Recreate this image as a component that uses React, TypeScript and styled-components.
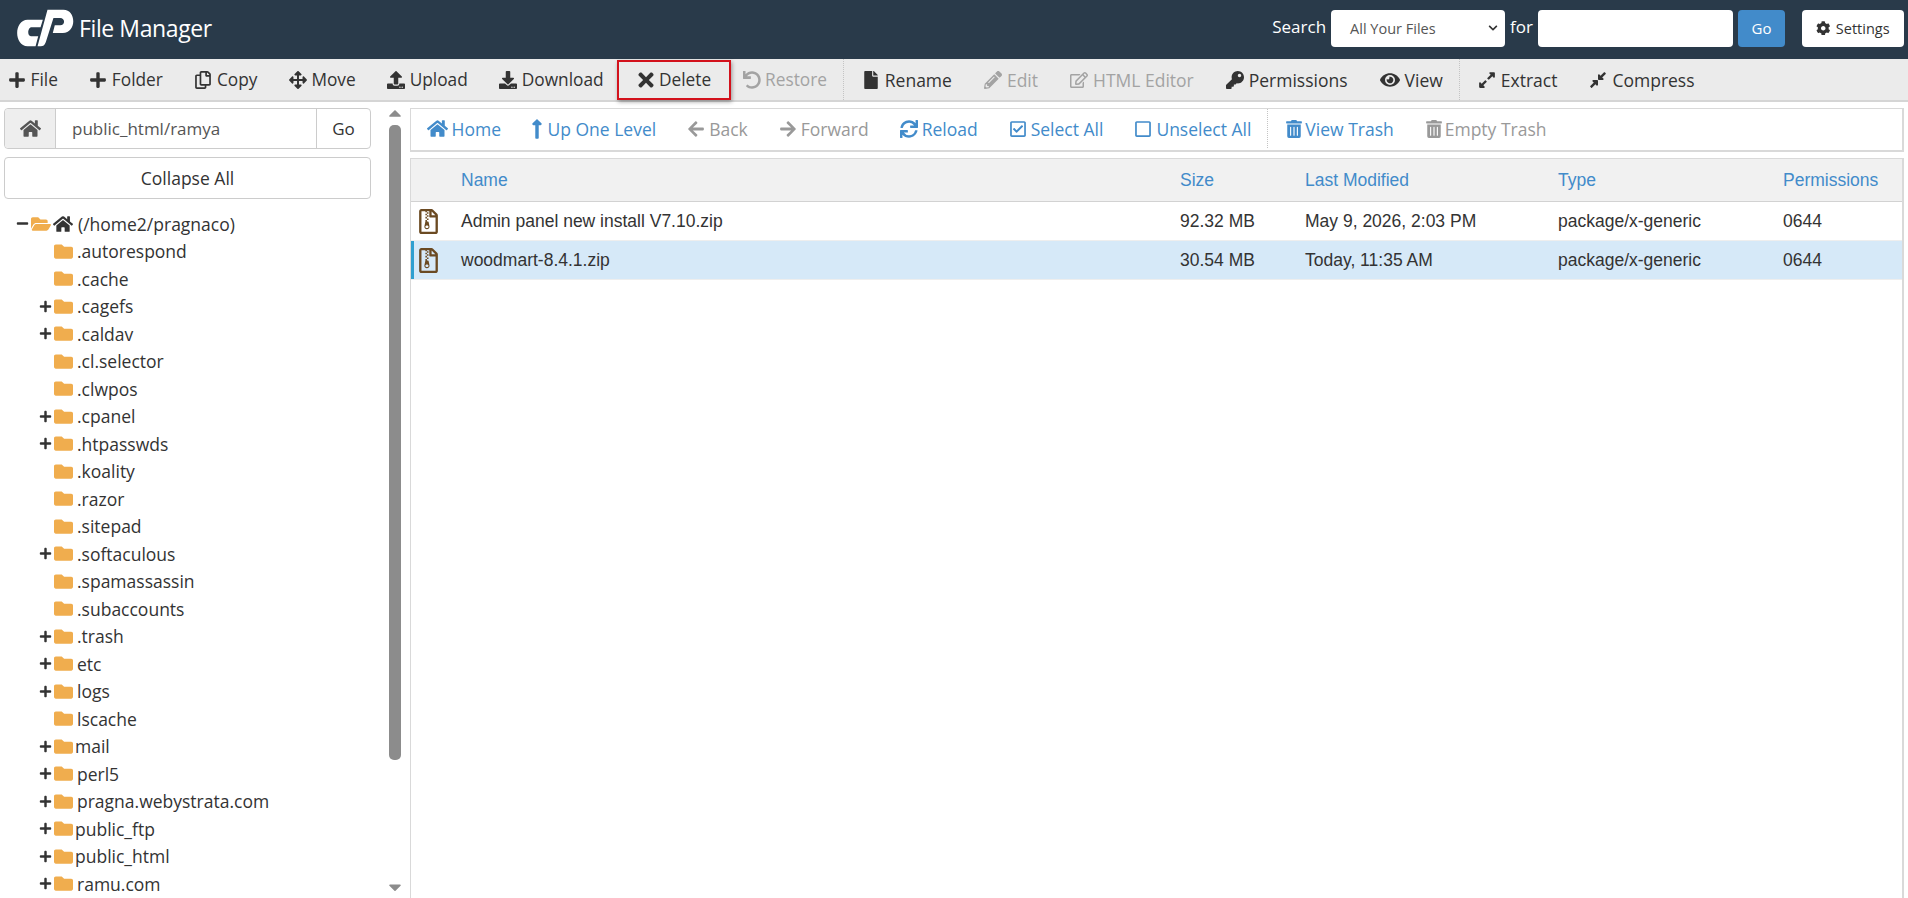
import { ReactElement, ReactNode } from "react";
import styled, { createGlobalStyle } from "styled-components";
import {
    FaArrowLeft, FaArrowRight, FaArrowsAlt, FaCaretDown, FaCaretUp, FaChevronDown, FaCog, FaCompressAlt, FaDownload,
    FaExpandAlt, FaEye, FaFile, FaFolder, FaFolderOpen, FaHome, FaKey, FaLongArrowAltUp, FaMinus, FaPencilAlt, FaPlus,
    FaRegCheckSquare, FaRegCopy, FaRegEdit, FaRegFileArchive, FaRegSquare, FaSync, FaTimes, FaTrashAlt, FaUndo, FaUpload,
} from "react-icons/fa";

const GlobalStyle = createGlobalStyle`
    html, body {
        margin: 0;
        height: 100%;
        overflow: hidden;
        background: #fff;
        font-family: "Open Sans", sans-serif;
        color: #333;
    }
`;

// react-icons draws every glyph in a 1em box, so the wide and narrow ones need their own size
const HomeGlyph = styled(FaHome)`
    && {
        font-size: 21px;
    }
`;

const EyeGlyph = styled(FaEye)`
    && {
        font-size: 20px;
    }
`;

const CrossGlyph = styled(FaTimes)`
    && {
        font-size: 22px;
        margin: 0 -3px 0 -3.5px;
    }
`;

const UpGlyph = styled(FaLongArrowAltUp)`
    && {
        font-size: 22px;
        margin: 0 -5px 0 -5.5px;
    }
`;

const TrashGlyph = styled(FaTrashAlt)`
    margin-right: -2px;
`;

type Action = { icon: ReactNode; label: string; disabled?: boolean; marked?: boolean };

const fileActions: Action[][] = [
    [
        { icon: <FaPlus />, label: "File" },
        { icon: <FaPlus />, label: "Folder" },
        { icon: <FaRegCopy />, label: "Copy" },
        { icon: <FaArrowsAlt />, label: "Move" },
        { icon: <FaUpload />, label: "Upload" },
        { icon: <FaDownload />, label: "Download" },
        { icon: <CrossGlyph />, label: "Delete", marked: true },
        { icon: <FaUndo />, label: "Restore", disabled: true },
    ],
    [
        { icon: <FaFile />, label: "Rename" },
        { icon: <FaPencilAlt />, label: "Edit", disabled: true },
        { icon: <FaRegEdit />, label: "HTML Editor", disabled: true },
        { icon: <FaKey />, label: "Permissions" },
        { icon: <EyeGlyph />, label: "View" },
    ],
    [
        { icon: <FaExpandAlt />, label: "Extract" },
        { icon: <FaCompressAlt />, label: "Compress" },
    ],
];

const navActions: Action[][] = [
    [
        { icon: <HomeGlyph />, label: "Home" },
        { icon: <UpGlyph />, label: "Up One Level" },
        { icon: <FaArrowLeft />, label: "Back", disabled: true },
        { icon: <FaArrowRight />, label: "Forward", disabled: true },
        { icon: <FaSync />, label: "Reload" },
        { icon: <FaRegCheckSquare />, label: "Select All" },
        { icon: <FaRegSquare />, label: "Unselect All" },
    ],
    [
        { icon: <TrashGlyph />, label: "View Trash" },
        { icon: <TrashGlyph />, label: "Empty Trash", disabled: true },
    ],
];

const tree: { name: string; more?: boolean; tight?: boolean }[] = [
    { name: ".autorespond" },
    { name: ".cache" },
    { name: ".cagefs", more: true },
    { name: ".caldav", more: true },
    { name: ".cl.selector" },
    { name: ".clwpos" },
    { name: ".cpanel", more: true },
    { name: ".htpasswds", more: true },
    { name: ".koality" },
    { name: ".razor" },
    { name: ".sitepad" },
    { name: ".softaculous", more: true },
    { name: ".spamassassin" },
    { name: ".subaccounts" },
    { name: ".trash", more: true },
    { name: "etc", more: true },
    { name: "logs", more: true },
    { name: "lscache" },
    { name: "mail", more: true, tight: true },
    { name: "perl5", more: true },
    { name: "pragna.webystrata.com", more: true },
    { name: "public_ftp", more: true, tight: true },
    { name: "public_html", more: true, tight: true },
    { name: "ramu.com", more: true },
];

const files = [
    { name: "Admin panel new install V7.10.zip", size: "92.32 MB", modified: "May 9, 2026, 2:03 PM", type: "package/x-generic", perms: "0644" },
    { name: "woodmart-8.4.1.zip", size: "30.54 MB", modified: "Today, 11:35 AM", type: "package/x-generic", perms: "0644", selected: true },
];

export default function App(): ReactElement {
    return (
        <Page>
            <GlobalStyle />
            <TopBar>
                <Brand>
                    <svg width="58" height="40" viewBox="20 10 175 120" fill="#fff">
                        <path d="M52 45 H98 L91 68 H64 C52 68 50 95 62 95 H84 L76 125 H52 C10 125 10 45 52 45 Z" />
                        <path d="M112 15 H160 C200 15 200 85 158 85 H128 L134 62 H150 C166 62 166 40 150 40 H130 L107 112 C104 122 98 125 92 125 H82 Z" />
                    </svg>
                    <BrandName>File Manager</BrandName>
                </Brand>
                <SearchArea>
                    <SearchLabel>Search</SearchLabel>
                    <ScopeSelect>
                        All Your Files
                        <FaChevronDown />
                    </ScopeSelect>
                    <SearchLabel>for</SearchLabel>
                    <SearchInput />
                    <GoButton>Go</GoButton>
                    <SettingsButton><FaCog /> Settings</SettingsButton>
                </SearchArea>
            </TopBar>

            <MainToolbar>
                {fileActions.map((group, i) => (
                    <ToolGroup key={i} $first={i === 0}>
                        {group.map(a => (
                            <ToolItem key={a.label} $compact={i === 0} $disabled={a.disabled} $marked={a.marked}>
                                {a.icon}{a.label}
                            </ToolItem>
                        ))}
                    </ToolGroup>
                ))}
            </MainToolbar>

            <Workspace>
                <Sidebar>
                    <PathBar>
                        <PathHome><HomeGlyph /></PathHome>
                        <PathValue>public_html/ramya</PathValue>
                        <PathGo>Go</PathGo>
                    </PathBar>
                    <CollapseButton>Collapse All</CollapseButton>
                    <TreeRoot>
                        <TreeToggle><FaMinus /></TreeToggle>
                        <OpenFolderIcon />
                        <RootHomeIcon />
                        <RootLabel>(/home2/pragnaco)</RootLabel>
                    </TreeRoot>
                    {tree.map(t => (
                        <TreeRow key={t.name}>
                            <TreeToggle>{t.more && <FaPlus />}</TreeToggle>
                            <FolderIcon />
                            <TreeLabel $tight={t.tight}>{t.name}</TreeLabel>
                        </TreeRow>
                    ))}
                </Sidebar>

                <SideScroll>
                    <FaCaretUp />
                    <ScrollThumb />
                    <FaCaretDown />
                </SideScroll>

                <Content>
                    <NavBar>
                        {navActions.map((group, i) => (
                            <NavGroup key={i} $first={i === 0}>
                                {group.map(a => (
                                    <NavItem key={a.label} $disabled={a.disabled}>
                                        {a.icon}{a.label}
                                    </NavItem>
                                ))}
                            </NavGroup>
                        ))}
                    </NavBar>
                    <FileTable>
                        <HeadRow>
                            <span />
                            <HeadCell>Name</HeadCell>
                            <HeadCell>Size</HeadCell>
                            <HeadCell>Last Modified</HeadCell>
                            <HeadCell>Type</HeadCell>
                            <HeadCell>Permissions</HeadCell>
                        </HeadRow>
                        {files.map(f => (
                            <FileRow key={f.name} $selected={f.selected}>
                                <ZipIcon />
                                <span>{f.name}</span>
                                <span>{f.size}</span>
                                <span>{f.modified}</span>
                                <span>{f.type}</span>
                                <span>{f.perms}</span>
                            </FileRow>
                        ))}
                    </FileTable>
                </Content>
            </Workspace>
        </Page>
    );
}

const Page = styled.div`
    width: 1908px;
    height: 898px;
    overflow: hidden;
    display: flex;
    flex-direction: column;
`;

const TopBar = styled.header`
    height: 59px;
    flex: none;
    background: #293a4a;
    color: #fff;
    display: flex;
    align-items: center;
    justify-content: space-between;
    padding: 0 4px 3px 17px;
    box-sizing: border-box;
`;

const Brand = styled.div`
    display: flex;
    align-items: center;
    gap: 4px;
`;

const BrandName = styled.div`
    font-size: 23px;
    letter-spacing: -0.4px;
`;

const SearchArea = styled.div`
    display: flex;
    align-items: center;
`;

const SearchLabel = styled.span`
    font-size: 17px;
    margin: -3px 5px 0;
`;

const ScopeSelect = styled.div`
    width: 174px;
    height: 37px;
    box-sizing: border-box;
    background: #fff;
    color: #555;
    border-radius: 4px;
    font-size: 14.5px;
    padding: 0 7px 0 19px;
    display: flex;
    align-items: center;
    justify-content: space-between;

    svg {
        font-size: 10px;
        color: #333;
    }
`;

const SearchInput = styled.div`
    width: 195px;
    height: 37px;
    background: #fff;
    border-radius: 4px;
`;

const GoButton = styled.div`
    width: 47px;
    height: 37px;
    margin-left: 5px;
    background: #428bca;
    border-radius: 4px;
    font-size: 15px;
    display: flex;
    align-items: center;
    justify-content: center;
`;

const SettingsButton = styled.div`
    width: 102px;
    height: 37px;
    margin-left: 17px;
    background: #fff;
    color: #333;
    border-radius: 4px;
    font-size: 14.5px;
    display: flex;
    align-items: center;
    justify-content: center;
    gap: 5px;
`;

const MainToolbar = styled.nav`
    height: 43px;
    flex: none;
    box-sizing: border-box;
    background: #ebebeb;
    border-bottom: 2px solid #d5d5d5;
    display: flex;
    align-items: stretch;
`;

const ToolGroup = styled.div<{ $first?: boolean }>`
    display: flex;
    align-items: center;
    padding-left: ${p => (p.$first ? "0" : "10px")};
    border-left: ${p => (p.$first ? "none" : "1px dotted #c4c4c4")};
`;

const ToolItem = styled.div<{ $compact?: boolean; $disabled?: boolean; $marked?: boolean }>`
    position: relative;
    padding: 0 ${p => (p.$compact ? "15.75px" : "16px")};
    padding-left: ${p => (p.$marked ? "19.5px" : "")};
    display: flex;
    align-items: center;
    gap: ${p => (p.$compact ? "4.5px" : "5px")};
    font-size: ${p => (p.$compact ? "17.3px" : "17.5px")};
    white-space: nowrap;
    color: ${p => (p.$disabled ? "#a3a3a3" : "#333")};

    &:first-child {
        padding-left: 8px;
    }

    svg {
        font-size: 18px;
    }

    ${p => p.$marked && `
        &::after {
            content: "";
            position: absolute;
            inset: -8px -4px -9px -2px;
            border: 2px solid #d3121c;
            box-shadow: 1px 2px 4px rgba(0, 0, 0, 0.35);
        }
    `}
`;

const Workspace = styled.div`
    flex: 1;
    min-height: 0;
    display: flex;
`;

const Sidebar = styled.aside`
    width: 367px;
    flex: none;
    margin: 6px 0 0 4px;
    overflow: hidden;
`;

const PathBar = styled.div`
    height: 41px;
    box-sizing: border-box;
    border: 1px solid #ccc;
    border-radius: 4px;
    display: flex;
    align-items: stretch;
    font-size: 17px;
`;

const PathHome = styled.div`
    width: 50px;
    flex: none;
    background: #eee;
    border-right: 1px solid #ccc;
    color: #555;
    display: flex;
    align-items: center;
    justify-content: center;
    border-radius: 4px 0 0 4px;
`;

const PathValue = styled.div`
    flex: 1;
    padding-left: 16px;
    color: #555;
    display: flex;
    align-items: center;
`;

const PathGo = styled.div`
    width: 53px;
    flex: none;
    border-left: 1px solid #ccc;
    display: flex;
    align-items: center;
    justify-content: center;
`;

const CollapseButton = styled.div`
    height: 42px;
    box-sizing: border-box;
    margin: 8px 0 11px;
    border: 1px solid #ccc;
    border-radius: 4px;
    font-size: 17.5px;
    display: flex;
    align-items: center;
    justify-content: center;
`;

const TreeRoot = styled.div`
    height: 27.5px;
    padding-left: 12px;
    display: flex;
    align-items: center;
    font-size: 17.5px;

    > svg {
        flex: none;
    }
`;

const TreeRow = styled(TreeRoot)`
    padding-left: 35px;
`;

const TreeToggle = styled.span`
    width: 15px;
    flex: none;
    display: flex;
    align-items: center;
    font-size: 13px;
    color: #333;
`;

const OpenFolderIcon = styled(FaFolderOpen)`
    font-size: 20px;
    color: #f0ad4e;
    margin-right: 2px;
`;

const RootHomeIcon = styled(FaHome)`
    font-size: 20px;
    color: #333;
    margin-right: 5px;
`;

const FolderIcon = styled(FaFolder)`
    font-size: 19px;
    color: #f0ad4e;
`;

const RootLabel = styled.span`
    white-space: nowrap;
`;

const TreeLabel = styled.span<{ $tight?: boolean }>`
    margin-left: ${p => (p.$tight ? "2px" : "4px")};
    white-space: nowrap;
`;

const SideScroll = styled.div`
    width: 12px;
    flex: none;
    margin: 1px 0 0 18px;
    display: flex;
    flex-direction: column;
    align-items: center;
    color: #8c8c8c;
    height: 794px;

    svg {
        font-size: 20px;
        flex: none;
    }
`;

const ScrollThumb = styled.div`
    width: 12px;
    height: 635px;
    margin: 2px 0 auto;
    flex: none;
    background: #8c8c8c;
    border-radius: 5px;
`;

const Content = styled.main`
    width: 1494px;
    flex: none;
    margin: 6px 0 0 9px;
    display: flex;
    flex-direction: column;
    gap: 6px;
`;

const NavBar = styled.div`
    height: 44px;
    flex: none;
    box-sizing: border-box;
    border: 2px solid #d9d9d9;
    border-width: 1px 2px 2px 1px;
    padding-bottom: 2px;
    display: flex;
    align-items: stretch;
    font-size: 17.5px;
`;

const NavGroup = styled.div<{ $first?: boolean }>`
    display: flex;
    align-items: center;
    padding-left: ${p => (p.$first ? "0" : "2px")};
    border-left: ${p => (p.$first ? "none" : "1px dotted #c4c4c4")};
`;

const NavItem = styled.div<{ $disabled?: boolean }>`
    padding: 0 15.5px;
    display: flex;
    align-items: center;
    gap: 4px;
    white-space: nowrap;
    color: ${p => (p.$disabled ? "#999" : "#428bca")};

    svg {
        font-size: 18px;
    }
`;

const FileTable = styled.div`
    flex: 1;
    border: 2px solid #d9d9d9;
    border-width: 1px 2px 0 1px;
    font-family: "Liberation Sans", Arial, sans-serif;
    font-size: 17.5px;
`;

const tableColumns = "50px 719px 125px 253px 225px 1fr";

const HeadRow = styled.div`
    height: 43px;
    box-sizing: border-box;
    display: grid;
    grid-template-columns: ${tableColumns};
    align-items: center;
    background: #f1f1f1;
    border-bottom: 1px solid #d2d2d2;
`;

const HeadCell = styled.span`
    color: #428bca;
`;

const FileRow = styled.div<{ $selected?: boolean }>`
    height: 39px;
    box-sizing: border-box;
    display: grid;
    grid-template-columns: ${tableColumns};
    align-items: center;
    background: ${p => (p.$selected ? "#d6e9f8" : "#fff")};
    border-bottom: 1px solid #eee;
    box-shadow: ${p => (p.$selected ? "inset 3px 0 0 #2f9fd0" : "none")};
`;

const ZipIcon = styled(FaRegFileArchive)`
    font-size: 25px;
    color: #6b4a22;
    margin-left: 5px;
`;
